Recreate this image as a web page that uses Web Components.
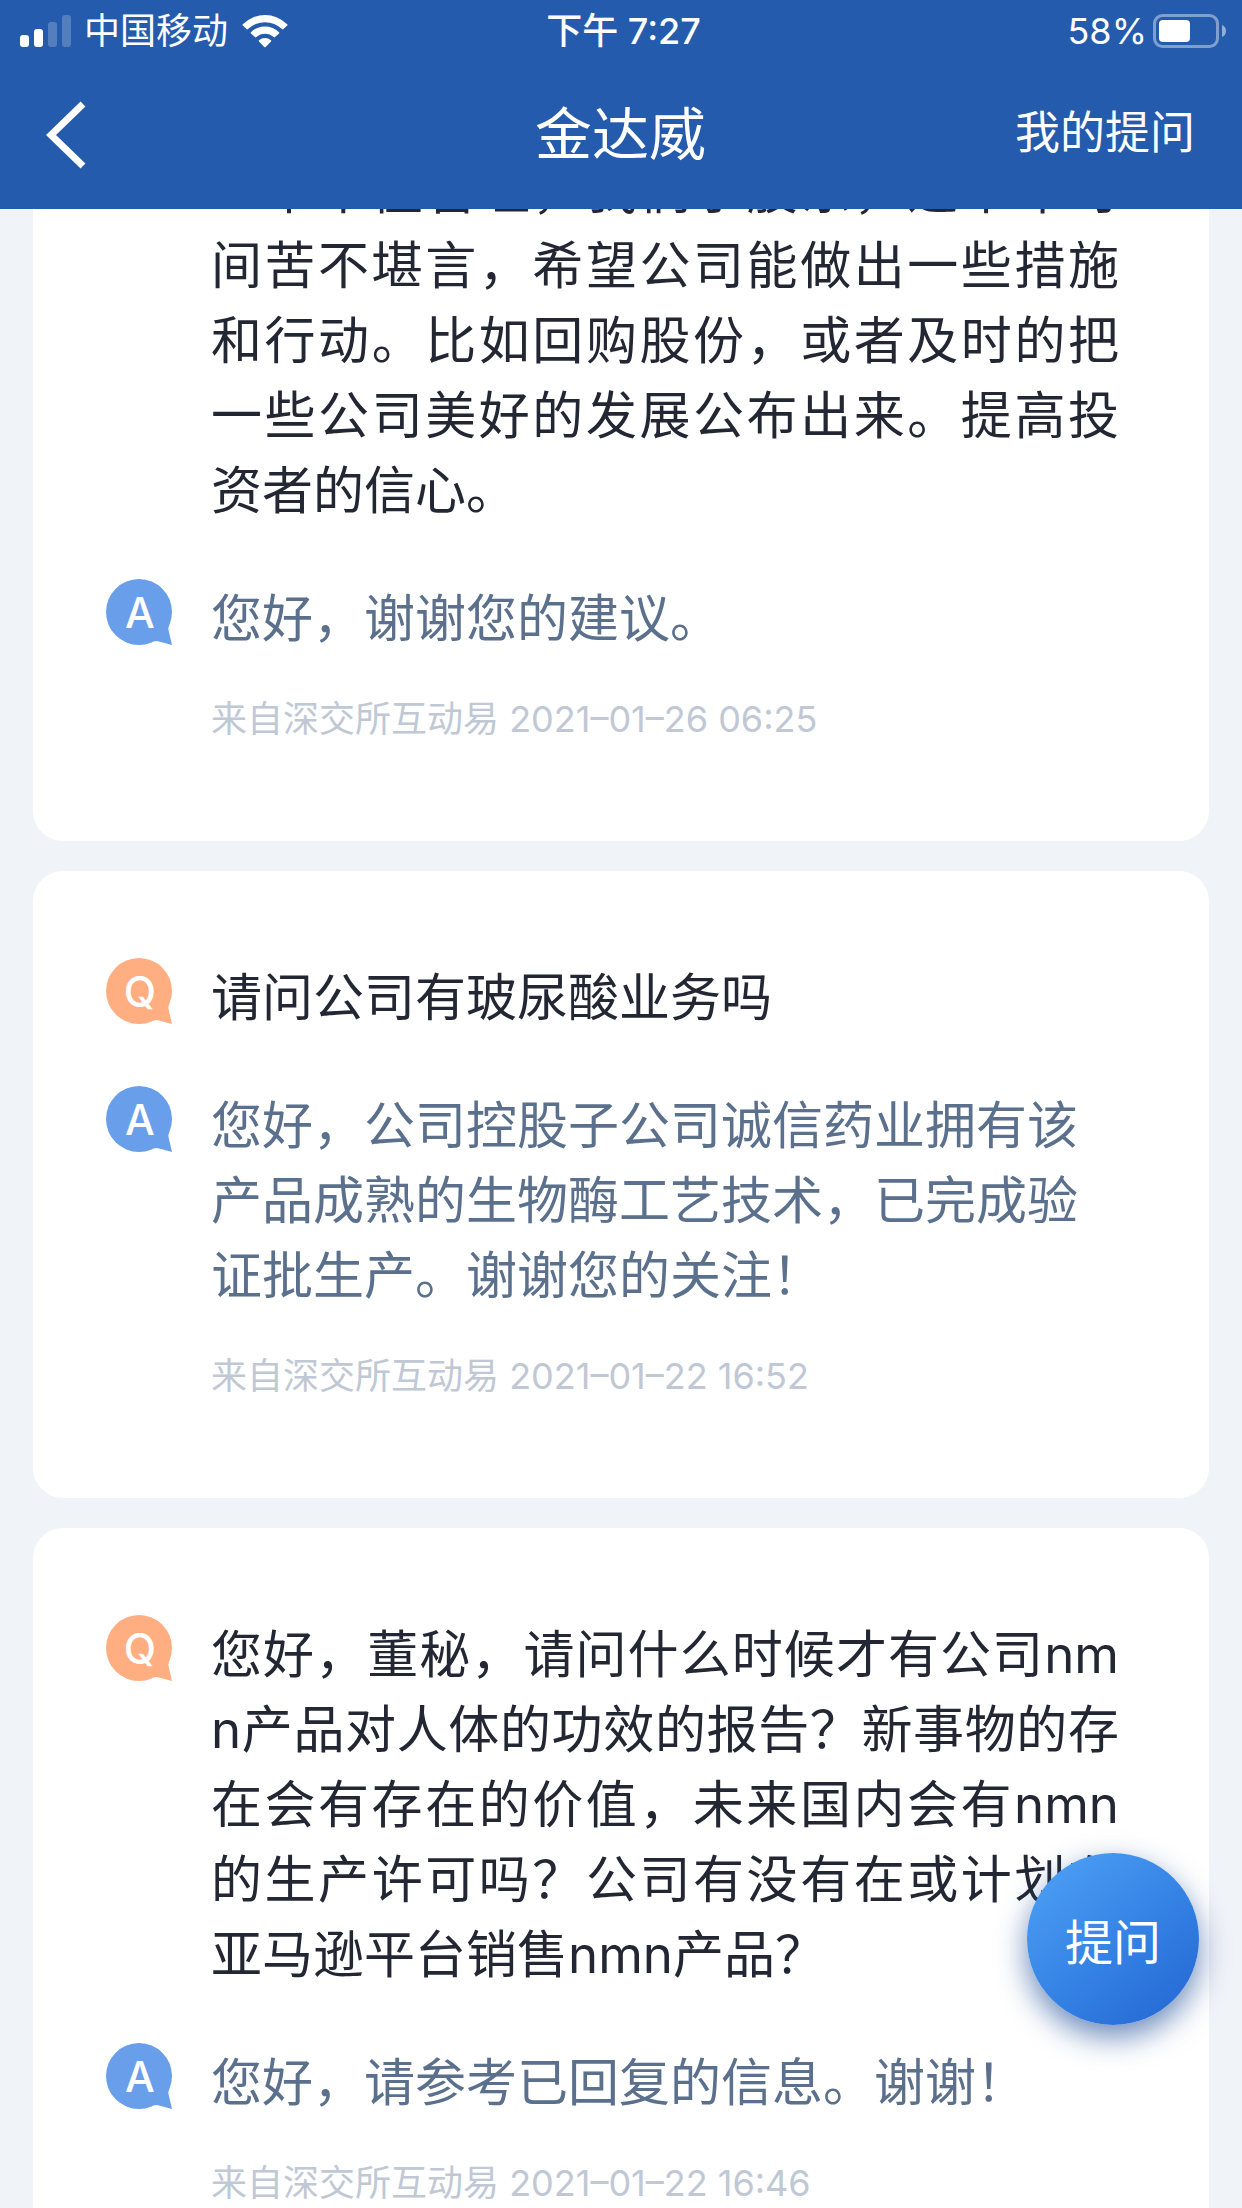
<!DOCTYPE html>
<html lang="zh-CN">
<head>
<meta charset="utf-8">
<meta name="viewport" content="width=device-width, initial-scale=1">
<title>金达威</title>
<style>
body{
    margin: 0;
    background-color: #f0f3f8;
    font-family: Inter, 'Noto Sans CJK SC', sans-serif;
    font-weight: 400;
}
</style>
</head>
<body>
<qa-app>
    <status-bar slot="header" carrier="中国移动" time="下午 7:27" battery="58"></status-bar>
    <nav-bar slot="header">
        金达威
        <a slot="action" href="#mine">我的提问</a>
    </nav-bar>

    <qa-card continued>
        <qa-entry type="q" continued>一下市值管理，我们小股东，这半年时间苦不堪言，希望公司能做出一些措施和行动。比如回购股份，或者及时的把一些公司美好的发展公布出来。提高投资者的信心。</qa-entry>
        <qa-entry type="a">您好，谢谢您的建议。</qa-entry>
        <span slot="source">来自深交所互动易 2021–01–26 06:25</span>
    </qa-card>

    <qa-card>
        <qa-entry type="q">请问公司有玻尿酸业务吗</qa-entry>
        <qa-entry type="a">您好，公司控股子公司诚信药业拥有该产品成熟的生物酶工艺技术，已完成验证批生产。谢谢您的关注！</qa-entry>
        <span slot="source">来自深交所互动易 2021–01–22 16:52</span>
    </qa-card>

    <qa-card>
        <qa-entry type="q">您好，董秘，请问什么时候才有公司nmn产品对人体的功效的报告？新事物的存在会有存在的价值，未来国内会有nmn的生产许可吗？公司有没有在或计划在亚马逊平台销售nmn产品？</qa-entry>
        <qa-entry type="a">您好，请参考已回复的信息。谢谢！</qa-entry>
        <span slot="source">来自深交所互动易 2021–01–22 16:46</span>
    </qa-card>

    <ask-button slot="floating">提问</ask-button>
</qa-app>

<script>
class QaApp extends HTMLElement{

    constructor(){
        super();
        this.attachShadow({mode: 'open'})
    }

    connectedCallback(){
        this.shadowRoot.innerHTML = `
        <style>
        :host{
            position: relative;
            display: flex;
            flex-direction: column;
            height: 100vh;
            overflow: hidden;
        }
        header{
            position: relative;
            z-index: 1;
            flex: none;
            background-color: #245bad;
            color: white;
        }
        main{
            display: flex;
            flex-direction: column;
            gap: 30px;
            padding: 0 33px;
        }
        ::slotted(qa-card){
            flex: none;
        }
        ::slotted(ask-button){
            position: absolute;
            right: 43px;
            bottom: 183px;
            z-index: 2;
        }
        </style>
        <header><slot name="header"></slot></header>
        <main><slot></slot></main>
        <slot name="floating"></slot>
        `;
    }
}

class StatusBar extends HTMLElement{

    constructor(){
        super();
        this.attachShadow({mode: 'open'})
    }

    connectedCallback(){
        const level = Number(this.getAttribute('battery'));
        this.shadowRoot.innerHTML = `
        <style>
        :host{
            display: grid;
            grid-template-columns: 1fr auto 1fr;
            align-items: center;
            height: 60px;
            padding: 0 15px 0 20px;
            font-size: 36px;
            line-height: 62px;
        }
        .left, .right{
            display: flex;
            align-items: center;
        }
        .carrier{
            margin: 0 14px 0 13px;
        }
        .time{
            font-weight: 500;
        }
        .right{
            justify-content: flex-end;
            gap: 6px;
        }
        svg{
            display: block;
            fill: currentColor;
        }
        </style>
        <div class="left">
            <svg width="51" height="34" viewBox="0 0 51 34" aria-hidden="true">
                <rect x="0" y="21" width="9" height="12" rx="3"/>
                <rect x="14" y="15" width="9" height="18" rx="3"/>
                <rect x="28" y="8" width="9" height="25" rx="3" opacity=".22"/>
                <rect x="42" y="1" width="9" height="32" rx="3" opacity=".22"/>
            </svg>
            <span class="carrier">${this.getAttribute('carrier')}</span>
            <svg width="46" height="34" viewBox="0 0 46 34" aria-hidden="true">
                <path d="M0.8 10.2a31.5 31.5 0 0 1 44.4 0a1 1 0 0 1 0 1.400l-3.800 3.500a1 1 0 0 1-1.400 0a24.500 24.500 0 0 0-34 0a1 1 0 0 1-1.400 0l-3.800-3.500a1 1 0 0 1 0-1.400z"/>
                <path d="M9 18.200a20 20 0 0 1 28 0a1 1 0 0 1 0 1.400l-3.900 3.500a1 1 0 0 1-1.400 0a12.800 12.800 0 0 0-17.400 0a1 1 0 0 1-1.400 0l-3.900-3.500a1 1 0 0 1 0-1.400z"/>
                <path d="M17 26.200a9 9 0 0 1 12 0a1 1 0 0 1 0 1.400l-5.300 5.400a1 1 0 0 1-1.400 0l-5.300-5.400a1 1 0 0 1 0-1.400z"/>
            </svg>
        </div>
        <div class="time">${this.getAttribute('time')}</div>
        <div class="right">
            <span>${level}%</span>
            <svg width="74" height="34" viewBox="0 0 74 34" aria-hidden="true">
                <rect x="1.500" y="1.500" width="63" height="31" rx="8" fill="none" stroke="currentColor" stroke-width="3" opacity=".42"/>
                <rect x="6" y="6" width="${Math.round(54 * level / 100)}" height="22" rx="4"/>
                <path d="M69 11a6.500 6.500 0 0 1 0 12z" opacity=".5"/>
            </svg>
        </div>
        `;
    }
}

class NavBar extends HTMLElement{

    constructor(){
        super();
        this.attachShadow({mode: 'open'})
    }

    connectedCallback(){
        this.shadowRoot.innerHTML = `
        <style>
        :host{
            display: grid;
            grid-template-columns: 1fr auto 1fr;
            align-items: center;
            height: 149px;
            padding: 0 47px 0 46px;
        }
        button{
            justify-self: start;
            padding: 0;
            border: 0;
            background: none;
            color: inherit;
        }
        svg{
            display: block;
        }
        h1{
            margin: 0;
            font-size: 57px;
            font-weight: 400;
            line-height: 84px;
        }
        ::slotted(a){
            justify-self: end;
            margin-bottom: 4px;
            color: inherit;
            font-size: 45px;
            line-height: 68px;
            text-decoration: none;
        }
        </style>
        <button type="button" aria-label="返回">
            <svg width="42" height="68" viewBox="0 0 42 68" fill="none" stroke="currentColor" stroke-width="7">
                <path d="M37 3L5 34L37 65"/>
            </svg>
        </button>
        <h1><slot></slot></h1>
        <slot name="action"></slot>
        `;
        this.shadowRoot.querySelector('button').addEventListener('click', () => history.back())
    }
}

class QaCard extends HTMLElement{

    constructor(){
        super();
        this.attachShadow({mode: 'open'})
    }

    connectedCallback(){
        this.shadowRoot.innerHTML = `
        <style>
        :host{
            display: block;
            padding: 87px 90px 95px 73px;
            border-radius: 30px;
            background-color: white;
        }
        /* scrolled partly under the header */
        :host([continued]){
            margin-top: -58px;
            padding-top: 0;
        }
        .entries{
            display: flex;
            flex-direction: column;
            gap: 51px;
        }
        .source{
            margin: 36px 0 0 105px;
            color: #bfc8d4;
            font-size: 36px;
            line-height: 54px;
        }
        </style>
        <div class="entries"><slot></slot></div>
        <div class="source"><slot name="source"></slot></div>
        `;
    }
}

class QaEntry extends HTMLElement{

    constructor(){
        super();
        this.attachShadow({mode: 'open'})
    }

    connectedCallback(){
        const type = this.getAttribute('type');
        const icon = this.hasAttribute('continued') ? '' : `
            <svg width="66" height="66" viewBox="0 0 66 66">
                <circle cx="33" cy="33" r="33"/>
                <path d="M48 62.500Q50 61.600 53 62.500L66 66L62.500 51Q62 49 63 46L40 40z"/>
                <text x="34" y="49" text-anchor="middle">${type.toUpperCase()}</text>
            </svg>`;
        this.shadowRoot.innerHTML = `
        <style>
        :host{
            display: grid;
            grid-template-columns: 66px minmax(0, 1fr);
            column-gap: 39px;
            color: #5b708d;
            font-size: 51px;
            line-height: 75px;
        }
        :host([type="q"]){
            color: #232733;
        }
        svg{
            display: block;
            fill: #699eea;
        }
        :host([type="q"]) svg{
            fill: #ffae82;
        }
        text{
            fill: white;
            font-size: 42px;
            font-weight: 500;
        }
        p{
            grid-column: 2;
            margin: 0;
            padding-top: 2px;
            word-break: break-all;
        }
        :host([type="q"]) p{
            text-align: justify;
        }
        </style>
        ${icon}
        <p><slot></slot></p>
        `;
    }
}

class AskButton extends HTMLElement{

    constructor(){
        super();
        this.attachShadow({mode: 'open'})
    }

    connectedCallback(){
        this.shadowRoot.innerHTML = `
        <style>
        :host{
            display: block;
        }
        button{
            display: block;
            width: 172px;
            height: 172px;
            padding: 0;
            border: 0;
            border-radius: 50%;
            background: linear-gradient(140deg, #4a9df3 10%, #3481e4 55%, #2468d2 95%);
            box-shadow: 0 12px 30px rgba(28, 76, 150, .65);
            color: white;
            font: inherit;
            font-size: 48px;
        }
        </style>
        <button type="button"><slot></slot></button>
        `;
    }
}

customElements.define('qa-app', QaApp);
customElements.define('status-bar', StatusBar);
customElements.define('nav-bar', NavBar);
customElements.define('qa-card', QaCard);
customElements.define('qa-entry', QaEntry);
customElements.define('ask-button', AskButton);
</script>
</body>
</html>
